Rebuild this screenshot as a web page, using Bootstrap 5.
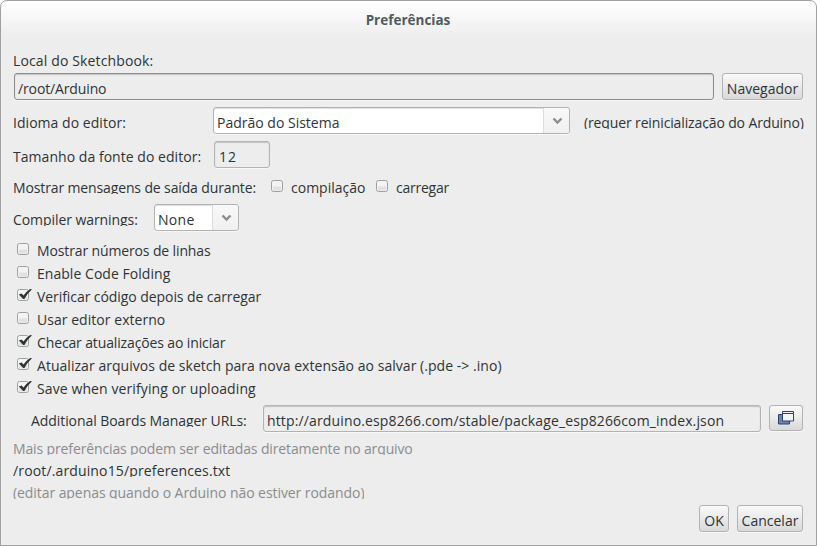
<!DOCTYPE html>
<html lang="pt-BR">
<head>
<meta charset="utf-8">
<meta name="viewport" content="width=device-width, initial-scale=1">
<title>Preferências</title>
<link href="https://cdn.jsdelivr.net/npm/bootstrap@5.3.0/dist/css/bootstrap.min.css" rel="stylesheet">
<style>
body{margin:0;background:#fff;font:14px/18px "Open Sans","Noto Sans",sans-serif;color:#2e3436}
.dialog{width:817px;height:546px;border:1px solid #a0a0a0;border-radius:7px 7px 0 0;background:linear-gradient(#fff 0,#ededed 36px);padding:0 13px 0 12px}
.dialog-title{height:51px;padding-top:10px;font-size:13.5px;font-weight:700;color:#4f5b62;text-align:center}
/* one-line captions hide their descenders below the baseline */
.txt{display:block;height:15px;line-height:18px;white-space:pre;flex:none}
.cut{overflow:hidden}
.h21{height:21px}.h23{height:23px}.h27{height:27px}.h34{height:34px}.h35{height:35px}.h36{height:36px}
.note{height:22px}.note-last{height:21px}
.entry{height:27px;border:1px solid #b3b3b3;border-radius:3px;background:#ededed;box-shadow:inset 0 1px 1px #c4c4c4,0 1px 0 #f7f7f7;padding:6px 0 0 4px;flex:none}
.entry-active{border-color:#8c8c8c;padding-left:3px}
.tool{height:27px;border:1px solid #b3b3b3;border-radius:3px;background:linear-gradient(#fafafa,#d9d9d9);color:inherit;font:inherit;line-height:18px;padding:6px 0 1px;text-align:center;flex:none;box-shadow:0 1px 0 #f7f7f7;white-space:nowrap}
.combo{display:flex;height:27px;border:1px solid #b3b3b3;border-radius:3px;background:#fff;box-shadow:inset 0 1px 1px #ddd,0 1px 0 #f7f7f7;flex:none}
.combo-text{flex:1;padding:6px 0 0 3px}
.combo-arrow{width:26px;border-left:1px solid #ddd;background:linear-gradient(#f9f9f9,#f0f0f0);border-radius:0 3px 3px 0;padding-left:7px}
.combo-arrow svg,.tick svg,.tool svg{display:block}
.tick{width:17px;height:14px;flex:none}
.w-path{width:700px;margin-left:1px}.w-lang{width:357px}.w-size{width:56px;margin-left:1px}.w-warn{width:85px}.w-url{width:498px}
.b-browse{width:81px}.b-win{width:34px;height:26px;padding:0 0 0 8px}.b-ok{width:30px}.b-cancel{width:66px}
.c-lang{width:200px}.c-size{width:200px}.c-out{width:258px}.c-warn{width:141px}.c-url{width:250px;padding-left:18px}.c-comp{width:85px}
.mt-lbl{margin-top:7px}.mt-out{margin-top:2px}.mt-box{margin-top:2px}
.ms-note{margin-left:14px}.ms-box{margin-left:3px}.ms-url{margin-left:-1px}
.checks{padding:2px 0 0 4px}.checks .txt{margin-left:3px}
.url-row{margin-top:2px}
.dim{color:#8a8c8d}
.a1{letter-spacing:-.07px}.a2{letter-spacing:-.13px}.p0{letter-spacing:.04px}.p1{letter-spacing:.1px}.p2{letter-spacing:.14px}.p3{letter-spacing:.3px}.n2{letter-spacing:-.24px}.p9{letter-spacing:.9px}
</style>
</head>
<body>
<svg width="0" height="0" class="d-none">
  <symbol id="off" viewBox="0 0 17 14"><rect x=".5" y="1.5" width="11" height="11" rx="2" fill="#f3f3f3" stroke="#a0a0a0"/><path d="M2 8.500h8M2 10.500h8" stroke="#e1e1e1" stroke-width="2"/></symbol>
  <symbol id="on" viewBox="0 0 17 14"><rect x=".5" y="1.500" width="11" height="11" rx="2" fill="#f3f3f3" stroke="#a0a0a0"/><path d="M2 10h8" stroke="#e1e1e1" stroke-width="3"/><path d="M1.800 6.400L4.600 5.400L6.500 7.600Q9 3.600 13.200 1L15 1.200Q10.300 5.400 7.400 11H6.200Z" fill="#2e3436"/></symbol>
  <symbol id="arrow" viewBox="0 0 13 25"><path d="M2.500 10.500l4 4 4-4" fill="none" stroke="#8b8e8f" stroke-width="2.400"/></symbol>
</svg>
<main class="dialog">
  <header class="dialog-title">Preferências</header>
  <div class="d-flex align-items-start h21"><span class="txt cut p2">Local do Sketchbook:</span></div>
  <div class="d-flex align-items-start h34 gap-2">
    <div class="entry entry-active w-path"><span class="txt a2">/root/Arduino</span></div>
    <button class="tool b-browse">Navegador</button>
  </div>
  <div class="d-flex align-items-start h34">
    <span class="txt cut c-lang p0 mt-lbl">Idioma do editor:</span>
    <div class="combo w-lang"><span class="combo-text"><span class="txt">Padrão do Sistema</span></span><span class="combo-arrow"><svg width="13" height="25"><use href="#arrow"/></svg></span></div>
    <span class="txt cut a2 ms-note mt-lbl">(requer reinicialização do Arduino)</span>
  </div>
  <div class="d-flex align-items-start h36">
    <span class="txt cut c-size p0 mt-lbl">Tamanho da fonte do editor:</span>
    <div class="entry w-size"><span class="txt p9">12</span></div>
  </div>
  <div class="d-flex align-items-start h27">
    <span class="txt cut c-out a2 mt-out">Mostrar mensagens de saída durante:</span>
    <span class="tick mt-box"><svg width="17" height="14"><use href="#off"/></svg></span><span class="txt c-comp ms-box mt-out">compilação</span>
    <span class="tick mt-box"><svg width="17" height="14"><use href="#off"/></svg></span><span class="txt n2 ms-box mt-out">carregar</span>
  </div>
  <div class="d-flex align-items-start h36">
    <span class="txt cut c-warn a1 mt-lbl">Compiler warnings:</span>
    <div class="combo w-warn"><span class="combo-text"><span class="txt p3">None</span></span><span class="combo-arrow"><svg width="13" height="25"><use href="#arrow"/></svg></span></div>
  </div>
  <div class="checks">
    <div class="d-flex align-items-start h23"><span class="tick"><svg width="17" height="14"><use href="#off"/></svg></span><span class="txt a2">Mostrar números de linhas</span></div>
    <div class="d-flex align-items-start h23"><span class="tick"><svg width="17" height="14"><use href="#off"/></svg></span><span class="txt p0">Enable Code Folding</span></div>
    <div class="d-flex align-items-start h23"><span class="tick"><svg width="17" height="14"><use href="#on"/></svg></span><span class="txt a1">Verificar código depois de carregar</span></div>
    <div class="d-flex align-items-start h23"><span class="tick"><svg width="17" height="14"><use href="#off"/></svg></span><span class="txt p0">Usar editor externo</span></div>
    <div class="d-flex align-items-start h23"><span class="tick"><svg width="17" height="14"><use href="#on"/></svg></span><span class="txt a2">Checar atualizações ao iniciar</span></div>
    <div class="d-flex align-items-start h23"><span class="tick"><svg width="17" height="14"><use href="#on"/></svg></span><span class="txt p0">Atualizar arquivos de sketch para nova extensão ao salvar (.pde -&gt; .ino)</span></div>
    <div class="d-flex align-items-start h23"><span class="tick"><svg width="17" height="14"><use href="#on"/></svg></span><span class="txt p1">Save when verifying or uploading</span></div>
  </div>
  <div class="d-flex align-items-start h35 url-row">
    <span class="txt cut c-url a1 mt-lbl">Additional Boards Manager URLs:</span>
    <div class="d-flex gap-2 align-items-start">
      <div class="entry w-url"><span class="txt p2 ms-url">http://arduino.esp8266.com/stable/package_esp8266com_index.json</span></div>
      <button class="tool b-win" aria-label="Abrir lista de URLs"><svg width="18" height="16"><path d="M.5 4.500h11v9.500h-11z" fill="#6c82a8" stroke="#2b4472"/><path d="M4.500 1.500h11v9.500h-11z" fill="#f3f4f5" stroke="#2b4472"/><path d="M4 3.500h12" stroke="#2b4472"/></svg></button>
    </div>
  </div>
  <div class="d-flex align-items-start note"><span class="txt cut dim a2">Mais preferências podem ser editadas diretamente no arquivo</span></div>
  <div class="d-flex align-items-start note"><span class="txt cut p2">/root/.arduino15/preferences.txt</span></div>
  <div class="d-flex align-items-start note-last"><span class="txt cut dim a1">(editar apenas quando o Arduino não estiver rodando)</span></div>
  <footer class="d-flex justify-content-end gap-2">
    <button class="tool b-ok">OK</button>
    <button class="tool b-cancel">Cancelar</button>
  </footer>
</main>
<script src="https://cdn.jsdelivr.net/npm/bootstrap@5.3.0/dist/js/bootstrap.bundle.min.js"></script>
</body>
</html>
